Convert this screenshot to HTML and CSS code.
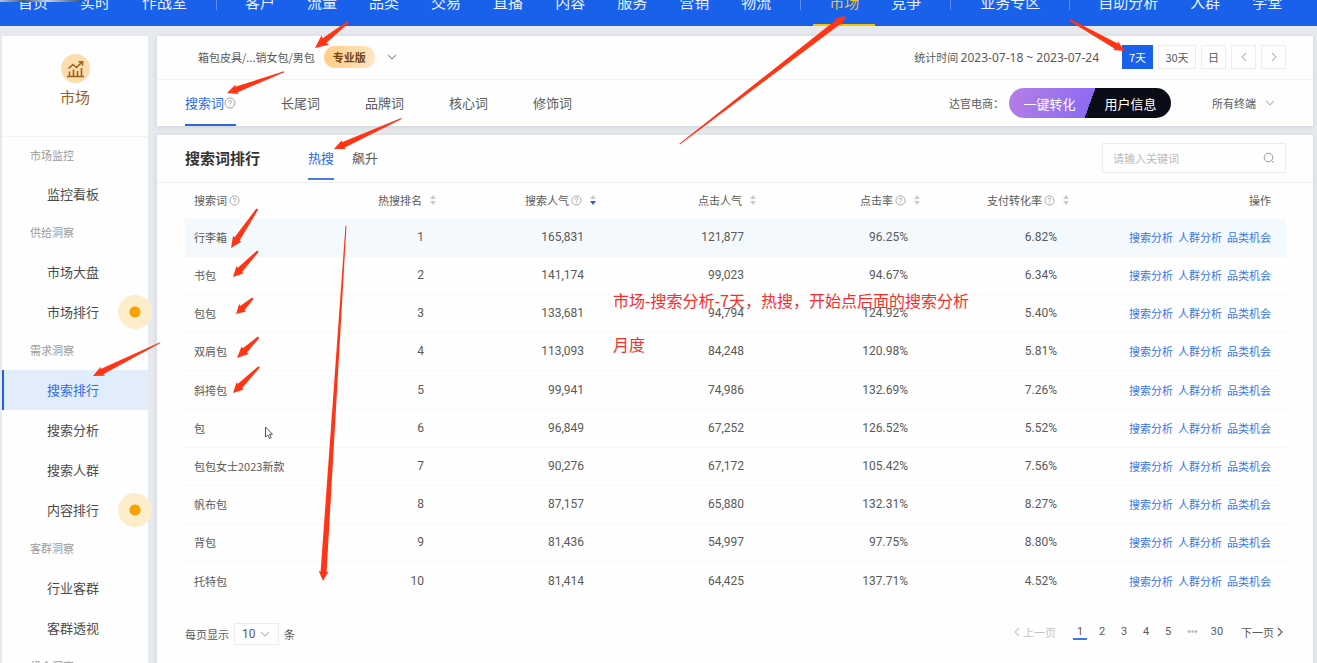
FILE: index.html
```html
<!DOCTYPE html>
<html lang="zh-CN">
<head>
  <meta charset="UTF-8" />
  <title>市场 - 搜索排行</title>
  <meta name="viewport" content="width=device-width, initial-scale=1.0" />
  <link rel="stylesheet" href="styles.css">
</head>
<body>
  <!-- shared icons -->
  <svg class="defs" width="0" height="0" aria-hidden="true">
    <symbol id="help" viewBox="0 0 12 12">
      <circle cx="6" cy="6" r="5" fill="none" stroke="currentColor" stroke-width="0.9" />
      <path d="M4.5 4.9a1.5 1.5 0 1 1 2.3 1.2c-.6.4-.8.6-.8 1.1M6 8.2v.9" fill="none" stroke="currentColor" stroke-width="0.9" />
    </symbol>
    <symbol id="sort" viewBox="0 0 6 12">
      <path d="M3 1L6 5H0z" fill="#ccc" />
      <path d="M3 11L6 7H0z" />
    </symbol>
    <symbol id="down" viewBox="0 0 10 6">
      <path d="M1 .8l4 4.2 4-4.2" fill="none" stroke="currentColor" stroke-width="1.1" />
    </symbol>
    <symbol id="left" viewBox="0 0 6 10">
      <path d="M5 1L1 5l4 4" fill="none" stroke="currentColor" stroke-width="1.1" />
    </symbol>
    <symbol id="right" viewBox="0 0 6 10">
      <path d="M1 1l4 4-4 4" fill="none" stroke="currentColor" stroke-width="1.1" />
    </symbol>
  </svg>

  <header class="topbar">
    <nav class="topnav">
      <a href="#">首页</a>
      <a href="#">实时</a>
      <a href="#">作战室</a>
      <span class="sep"></span>
      <a href="#">客户</a>
      <a href="#">流量</a>
      <a href="#">品类</a>
      <a href="#">交易</a>
      <a href="#">直播</a>
      <a href="#">内容</a>
      <a href="#">服务</a>
      <a href="#">营销</a>
      <a href="#">物流</a>
      <span class="sep"></span>
      <a href="#" class="active">市场</a>
      <a href="#">竞争</a>
      <span class="sep"></span>
      <a href="#">业务专区</a>
      <span class="sep"></span>
      <a href="#">自助分析</a>
      <a href="#">人群</a>
      <a href="#">学堂</a>
    </nav>
  </header>

  <div class="layout">
    <aside class="sidebar">
      <div class="side-head">
        <span class="side-icon">
          <svg width="19" height="18" viewBox="0 0 19 18" fill="none" stroke="#9a6420" stroke-width="1.6">
            <path d="M1 16.5h17M3.5 16v-4.500M7.500 16V9.500M11.500 16v-5M15.500 16V8" />
            <path d="M2.500 8.500L7 4.500l3.500 3L16 2M12.500 1.800h4v4" />
          </svg>
        </span>
        <span class="side-title">市场</span>
      </div>
      <nav class="side-nav">
        <h4>市场监控</h4>
        <a href="#">监控看板</a>
        <h4>供给洞察</h4>
        <a href="#">市场大盘</a>
        <a href="#">市场排行<i class="dot"></i></a>
        <h4>需求洞察</h4>
        <a href="#" class="active">搜索排行</a>
        <a href="#">搜索分析</a>
        <a href="#">搜索人群</a>
        <a href="#">内容排行<i class="dot"></i></a>
        <h4>客群洞察</h4>
        <a href="#">行业客群</a>
        <a href="#">客群透视</a>
        <h4>机会洞察</h4>
      </nav>
    </aside>

    <main class="main">
      <section class="card">
        <div class="filter-row">
          <span class="category">箱包皮具/...销女包/男包</span>
          <span class="badge">专业版</span>
          <svg class="chev" width="10" height="6"><use href="#down" /></svg>
          <span class="date-range">统计时间 <b>2023-07-18 ~ 2023-07-24</b></span>
          <div class="periods">
            <button type="button" class="on">7天</button>
            <button type="button" class="wide">30天</button>
            <button type="button">日</button>
            <button type="button" class="arrow" aria-label="前一段"><svg width="6" height="10"><use href="#left" /></svg></button>
            <button type="button" class="arrow" aria-label="后一段"><svg width="6" height="10"><use href="#right" /></svg></button>
          </div>
        </div>
        <div class="tab-row">
          <nav class="tabs">
            <a href="#" class="active">搜索词<svg class="help" width="12" height="12"><use href="#help" /></svg></a>
            <a href="#">长尾词</a>
            <a href="#">品牌词</a>
            <a href="#">核心词</a>
            <a href="#">修饰词</a>
          </nav>
          <span class="vendor">达官电商：</span>
          <div class="switch">
            <button type="button" class="convert">一键转化</button>
            <button type="button" class="users">用户信息</button>
          </div>
          <div class="select terminal">
            <select aria-label="终端"><option>所有终端</option></select>
            <svg width="10" height="6"><use href="#down" /></svg>
          </div>
        </div>
      </section>

      <section class="card rank">
        <div class="rank-head">
          <h2>搜索词排行</h2>
          <nav class="subtabs">
            <a href="#" class="active">热搜</a>
            <a href="#">飙升</a>
          </nav>
          <div class="search">
            <input type="text" placeholder="请输入关键词" aria-label="关键词" />
            <svg width="12" height="12" viewBox="0 0 12 12" fill="none" stroke="#999"><circle cx="5.500" cy="5.500" r="4.300" /><path d="M8.700 8.700L11 11" /></svg>
          </div>
        </div>

        <table>
          <colgroup>
            <col><col class="c-rank"><col class="c-num"><col class="c-num"><col class="c-rate"><col class="c-pay"><col class="c-ops">
          </colgroup>
          <thead>
            <tr>
              <th><div class="th">搜索词<svg class="help" width="11" height="11"><use href="#help" /></svg></div></th>
              <th><div class="th">热搜排名<svg class="sort" width="6" height="12"><use href="#sort" /></svg></div></th>
              <th><div class="th">搜索人气<svg class="help" width="11" height="11"><use href="#help" /></svg><svg class="sort desc" width="6" height="12"><use href="#sort" /></svg></div></th>
              <th><div class="th">点击人气<svg class="sort" width="6" height="12"><use href="#sort" /></svg></div></th>
              <th><div class="th">点击率<svg class="help" width="11" height="11"><use href="#help" /></svg><svg class="sort" width="6" height="12"><use href="#sort" /></svg></div></th>
              <th><div class="th">支付转化率<svg class="help" width="11" height="11"><use href="#help" /></svg><svg class="sort" width="6" height="12"><use href="#sort" /></svg></div></th>
              <th class="ops">操作</th>
            </tr>
          </thead>
          <tbody>
            <tr class="hover"><td>行李箱</td><td>1</td><td>165,831</td><td>121,877</td><td>96.25%</td><td>6.82%</td><td class="ops"><a href="#">搜索分析</a><a href="#">人群分析</a><a href="#">品类机会</a></td></tr>
            <tr><td>书包</td><td>2</td><td>141,174</td><td>99,023</td><td>94.67%</td><td>6.34%</td><td class="ops"><a href="#">搜索分析</a><a href="#">人群分析</a><a href="#">品类机会</a></td></tr>
            <tr><td>包包</td><td>3</td><td>133,681</td><td>94,794</td><td>124.92%</td><td>5.40%</td><td class="ops"><a href="#">搜索分析</a><a href="#">人群分析</a><a href="#">品类机会</a></td></tr>
            <tr><td>双肩包</td><td>4</td><td>113,093</td><td>84,248</td><td>120.98%</td><td>5.81%</td><td class="ops"><a href="#">搜索分析</a><a href="#">人群分析</a><a href="#">品类机会</a></td></tr>
            <tr><td>斜挎包</td><td>5</td><td>99,941</td><td>74,986</td><td>132.69%</td><td>7.26%</td><td class="ops"><a href="#">搜索分析</a><a href="#">人群分析</a><a href="#">品类机会</a></td></tr>
            <tr><td>包</td><td>6</td><td>96,849</td><td>67,252</td><td>126.52%</td><td>5.52%</td><td class="ops"><a href="#">搜索分析</a><a href="#">人群分析</a><a href="#">品类机会</a></td></tr>
            <tr><td>包包女士2023新款</td><td>7</td><td>90,276</td><td>67,172</td><td>105.42%</td><td>7.56%</td><td class="ops"><a href="#">搜索分析</a><a href="#">人群分析</a><a href="#">品类机会</a></td></tr>
            <tr><td>帆布包</td><td>8</td><td>87,157</td><td>65,880</td><td>132.31%</td><td>8.27%</td><td class="ops"><a href="#">搜索分析</a><a href="#">人群分析</a><a href="#">品类机会</a></td></tr>
            <tr><td>背包</td><td>9</td><td>81,436</td><td>54,997</td><td>97.75%</td><td>8.80%</td><td class="ops"><a href="#">搜索分析</a><a href="#">人群分析</a><a href="#">品类机会</a></td></tr>
            <tr><td>托特包</td><td>10</td><td>81,414</td><td>64,425</td><td>137.71%</td><td>4.52%</td><td class="ops"><a href="#">搜索分析</a><a href="#">人群分析</a><a href="#">品类机会</a></td></tr>
          </tbody>
        </table>

        <div class="rank-foot">
          <div class="page-size">
            <label for="size">每页显示</label>
            <div class="select size">
              <select id="size"><option>10</option></select>
              <svg width="10" height="6"><use href="#down" /></svg>
            </div>
            <span>条</span>
          </div>
          <nav class="pager">
            <button type="button" class="prev" disabled><svg width="6" height="10"><use href="#left" /></svg>上一页</button>
            <button type="button" class="num on">1</button>
            <button type="button" class="num">2</button>
            <button type="button" class="num">3</button>
            <button type="button" class="num">4</button>
            <button type="button" class="num">5</button>
            <span class="more">•••</span>
            <button type="button" class="num">30</button>
            <button type="button" class="next">下一页<svg width="6" height="10"><use href="#right" /></svg></button>
          </nav>
        </div>
      </section>
    </main>
  </div>

  <!-- notes drawn over the page: each arrow starts at its tip and runs back to the tail -->
  <svg class="arrows" width="1317" height="663" viewBox="0 0 1317 663" aria-hidden="true">
    <g fill="#ff3515">
      <path transform="translate(315 48) rotate(-38)" d="M0 0L13-6 12-3 42-1V1L12 3 13 6z" />
      <path transform="translate(227 93) rotate(-20)" d="M0 0L11-5 10-3 61-1V0L10 3 11 5z" />
      <path transform="translate(334 149) rotate(-24)" d="M0 0L11-5 10-3 74-1V0L10 3 11 5z" />
      <path transform="translate(846 16) rotate(142.400)" d="M0 0L10-5 9-3 210-.5V.5L9 3 10 5z" />
      <path transform="translate(1125 51) rotate(-150.600)" d="M0 0L11-5 10-3 63-1V1L10 3 11 5z" />
      <path transform="translate(231 248) rotate(-56)" d="M0 0L11-5 11-3 47-1V1L11 3 11 5z" />
      <path transform="translate(233 277) rotate(-46)" d="M0 0L10-5 10-3 36-1V1L10 3 10 5z" />
      <path transform="translate(236 314) rotate(-43)" d="M0 0L9-5 9-3 23-1V1L9 3 9 5z" />
      <path transform="translate(237 358) rotate(-44)" d="M0 0L11-5 11-3 30-1V1L11 3 11 5z" />
      <path transform="translate(233 393) rotate(-45)" d="M0 0L10-5 10-3 37-1V1L10 3 10 5z" />
      <path transform="translate(93 376) rotate(-26)" d="M0 0L11-5 10-3 75-1V0L10 3 11 5z" />
      <path transform="translate(323 581) rotate(-86.300)" d="M0 0L10-5 9-3 356-.5V.5L9 3 10 5z" />
    </g>
    <path d="M265.500 427v10l2.300-2 1.800 3.500 1.600-.8-1.700-3.400h3z" fill="#fff" stroke="#444" stroke-width="0.9" />
  </svg>
  <div class="note">
    <p>市场-搜索分析-7天，热搜，开始点后面的搜索分析</p>
    <p>月度</p>
  </div>
</body>
</html>
```
FILE: styles.css
```css
* {
  box-sizing: border-box;
}

body {
  position: relative;
  height: 100vh;
  margin: 0;
  overflow: hidden;
  display: flex;
  flex-direction: column;
  font-family: "Noto Sans CJK SC", sans-serif;
  font-size: 11px;
  color: #5a5a5a;
  background: #e6e9ed;
}

a {
  color: inherit;
  text-decoration: none;
}

button, select, input {
  font: inherit;
  color: inherit;
  border: 0;
  padding: 0;
  background: none;
}

svg {
  flex: none;
}

h2, h4, p {
  margin: 0;
}

.defs {
  position: absolute;
}

/* top navigation, scrolled partly out of view */
.topbar {
  position: relative;
  flex: none;
  display: flex;
  align-items: flex-end;
  height: 26px;
  background: #1961ea;
  overflow: hidden;
}

.topbar::before {
  content: "";
  position: absolute;
  left: 0;
  top: 0;
  width: 79px;
  height: 2px;
  background: linear-gradient(90deg, #b9c3d4, #47597c 30%, #c8d2e2 60%, #47597c);
}

.topnav {
  display: flex;
  align-items: center;
  padding-left: 2px;
  color: #e9f1ff;
  font-size: 15px;
  white-space: nowrap;
}

.topnav a {
  height: 48px;
  line-height: 48px;
  padding: 0 16px;
}

.topnav .active {
  color: #e8c33d;
  border-bottom: 2px solid #f5c400;
}

.topnav .sep {
  width: 1px;
  height: 16px;
  margin: 0 12px 0 13px;
  background: #5b90f3;
}

.topnav .active + a + .sep {
  margin-right: 13px;
}

.layout {
  flex: 1;
  display: flex;
  align-items: stretch;
  gap: 9px;
  min-height: 0;
  padding: 10px 4px 0 2px;
}

/* sidebar */
.sidebar {
  flex: none;
  width: 146px;
  background: #fefefe;
}

.side-head {
  display: flex;
  flex-direction: column;
  align-items: center;
  height: 101px;
  padding-top: 18px;
  border-bottom: 1px solid #f3f3f3;
}

.side-icon {
  display: flex;
  align-items: center;
  justify-content: center;
  width: 29px;
  height: 29px;
  border-radius: 50%;
  background: #fddcae;
}

.side-title {
  margin-top: 3px;
  font-size: 15px;
  line-height: 22px;
  color: #9a6420;
}

.side-nav h4 {
  height: 37px;
  line-height: 37px;
  padding-left: 28px;
  font-size: 11px;
  font-weight: normal;
  color: #9a9a9a;
}

.side-nav a {
  position: relative;
  display: block;
  height: 40px;
  line-height: 40px;
  padding-left: 45px;
  font-size: 13px;
  color: #4c4c4c;
}

.side-nav a + h4 {
  height: 38px;
}

.side-nav .active {
  color: #2f6bea;
  background: #e1edfb;
  box-shadow: inset 2px 0 #1961ea;
}

.dot {
  position: absolute;
  right: -4px;
  top: 3px;
  width: 34px;
  height: 34px;
  border-radius: 50%;
  background: radial-gradient(circle, #f9a100 5px, #fdeecb 6px);
}

/* cards */
.main {
  flex: 1;
  min-width: 0;
  display: flex;
  flex-direction: column;
  gap: 9px;
}

.card {
  background: #fefefe;
  box-shadow: 0 1px 5px rgba(60, 75, 95, 0.15);
}

.rank {
  flex: 1;
}

.filter-row {
  display: flex;
  align-items: center;
  height: 44px;
  padding: 0 27px 1px 41px;
  border-bottom: 1px solid #f1f2f3;
}

.badge {
  margin: 0 12px 0 9px;
  padding: 0 9px;
  border-radius: 11px;
  line-height: 22px;
  font-weight: bold;
  color: #74430f;
  background: linear-gradient(90deg, #ffce85, #ffe6c4);
}

.chev {
  color: #999;
}

.date-range {
  margin-left: auto;
}

.date-range b {
  font-family: "Noto Sans", sans-serif;
  font-size: 12px;
  font-weight: normal;
}

.periods {
  display: flex;
  gap: 5px;
  margin-left: 23px;
}

.periods button {
  width: 25px;
  height: 24px;
  border: 1px solid #ececec;
}

.periods .on {
  width: 31px;
  color: #fff;
  background: #1961ea;
  border-color: #1961ea;
}

.periods .wide {
  width: 38px;
}

.periods .arrow {
  color: #bbb;
}

.tab-row {
  display: flex;
  align-items: center;
  height: 46px;
  padding: 0 27px 0 28px;
}

.tabs {
  display: flex;
  gap: 45px;
  margin-right: auto;
  font-size: 13px;
}

.tabs a {
  display: flex;
  align-items: center;
  height: 46px;
  padding-bottom: 1px;
}

.tabs .active {
  color: #2f6bea;
  box-shadow: inset 0 -2px #3068d8;
}

.help {
  color: #999;
}

.switch {
  display: flex;
  margin-left: 5px;
  border-radius: 15px;
  overflow: hidden;
  font-size: 13px;
  color: #fff;
  background: linear-gradient(110deg, #b67ee4, #8d6cf2 50%, #0a0d18 50%);
}

.switch button {
  width: 81px;
  height: 30px;
}

.select {
  position: relative;
  display: flex;
  align-items: center;
}

.select select {
  appearance: none;
  width: 100%;
  height: 100%;
}

.select svg {
  position: absolute;
  right: 8px;
  color: #bbb;
  pointer-events: none;
}

.terminal {
  width: 74px;
  height: 24px;
  margin-left: 41px;
}

.terminal svg {
  right: 11px;
}

/* ranking */
.rank-head {
  display: flex;
  align-items: center;
  height: 48px;
  padding: 0 27px 2px 28px;
  border-bottom: 1px solid #eeeff0;
}

.rank-head h2 {
  font-size: 15px;
  color: #333;
}

.subtabs {
  display: flex;
  gap: 18px;
  margin-left: 48px;
  font-size: 13px;
}

.subtabs a {
  height: 45px;
  line-height: 45px;
}

.subtabs .active {
  color: #2f6bea;
  box-shadow: inset 0 -2px #4a7de0;
}

.search {
  display: flex;
  align-items: center;
  width: 184px;
  height: 30px;
  margin-left: auto;
  padding: 0 10px;
  border: 1px solid #ececec;
}

.search input {
  flex: 1;
  min-width: 0;
  outline: 0;
}

.search input::placeholder {
  color: #bbb;
}

table {
  width: calc(100% - 55px);
  margin-left: 28px;
  table-layout: fixed;
  border-collapse: separate;
  border-spacing: 0;
}

.c-rank { width: 120px; }
.c-num { width: 160px; }
.c-rate { width: 164px; }
.c-pay { width: 149px; }
.c-ops { width: 217px; }

th {
  height: 36px;
  padding: 0 0 2px;
  font-weight: normal;
}

.th {
  display: flex;
  align-items: center;
  justify-content: flex-end;
}

th:first-child .th {
  justify-content: flex-start;
  padding-left: 9px;
}

.th .help {
  margin-left: 2px;
}

.sort {
  margin-left: 8px;
  fill: #ccc;
}

.sort.desc {
  fill: #1f5fe0;
}

td {
  height: 38px;
  padding: 0 12px 1px 0;
  border-bottom: 1px solid #f7f7f7;
  font-family: Roboto, sans-serif;
  font-size: 12px;
  text-align: right;
}

tr:nth-child(5n) td {
  height: 39px;
}

tr:last-child td {
  border-bottom: 0;
}

td:first-child {
  padding: 0 0 1px 9px;
  text-align: left;
  white-space: nowrap;
}

td:first-child, td.ops {
  font-family: "Noto Sans CJK SC", sans-serif;
  font-size: 11px;
}

.hover td {
  background: #f3f9fd;
}

.ops {
  padding-right: 15px;
  text-align: right;
}

td.ops {
  color: #3a75ea;
}

.ops a + a {
  margin-left: 5px;
}

.rank-foot {
  display: flex;
  justify-content: space-between;
  align-items: flex-start;
  padding: 22px 30px 20px 28px;
}

.page-size {
  display: flex;
  align-items: center;
  gap: 5px;
}

.size {
  width: 45px;
  height: 22px;
  border: 1px solid #ececec;
}

.size select {
  padding-left: 7px;
  font-family: Roboto, sans-serif;
  font-size: 12px;
}

.pager {
  display: flex;
  gap: 8px;
}

.pager button {
  display: flex;
  align-items: center;
  justify-content: center;
  gap: 3px;
  height: 17px;
}

.pager .num {
  min-width: 14px;
  font-family: Roboto, sans-serif;
}

.pager .on {
  box-shadow: inset 0 -2px #3a75ea;
}

.pager .prev {
  margin-right: 9px;
  color: #c4c4c4;
}

.pager .next {
  margin-left: 9px;
}

.pager .more {
  width: 19px;
  font: 10px/17px "Liberation Sans", sans-serif;
  color: #bbb;
  text-align: center;
}

/* notes on top of the page */
.arrows {
  position: absolute;
  left: 0;
  top: 0;
  pointer-events: none;
}

.note {
  position: absolute;
  left: 613px;
  top: 278px;
  font-size: 16px;
  line-height: 44px;
  color: #fb2c2c;
  white-space: nowrap;
}
```
